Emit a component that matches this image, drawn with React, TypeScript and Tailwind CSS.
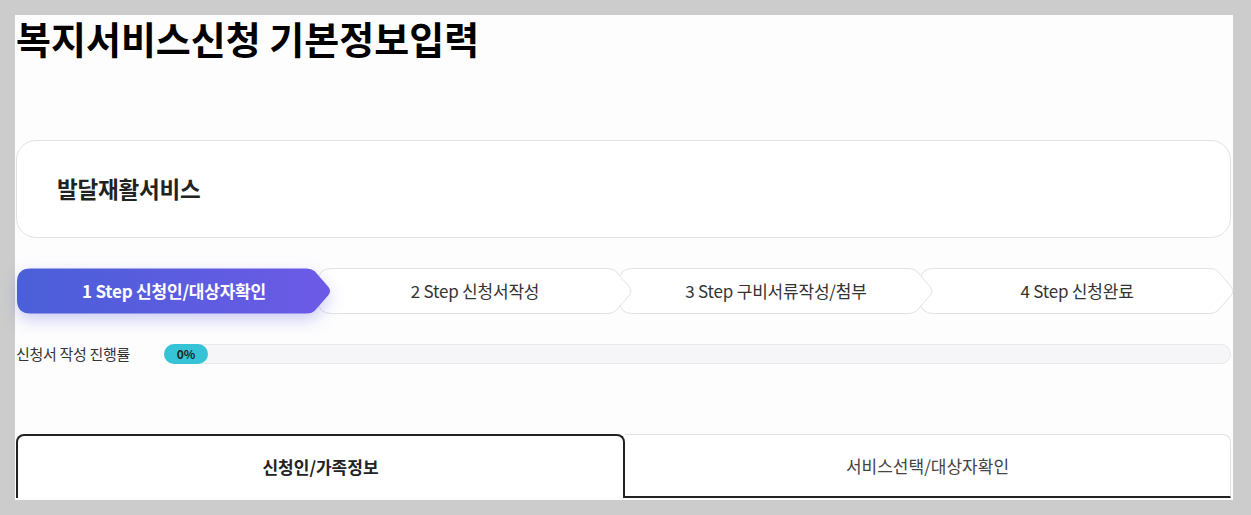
import React from 'react';

const FONT = "font-['Noto_Sans_CJK_KR','Noto_Sans',sans-serif]";

const steps = [
  { label: '1 Step 신청인/대상자확인', active: true, z: 'z-40' },
  { label: '2 Step 신청서작성', active: false, z: 'z-30' },
  { label: '3 Step 구비서류작성/첨부', active: false, z: 'z-20' },
  { label: '4 Step 신청완료', active: false, z: 'z-10' },
];

// chevron outline for one step, 315 x 46
const chevron =
  'M14 0.5 H290 Q295 0.5 298 3 L312 19 Q315 23 312 27 L298 43 Q295 45.5 290 45.5 H14 Q0.5 45.5 0.5 32 V14 Q0.5 0.5 14 0.5 Z';

const StepItem = ({ label, active, first, z }: { label: string; active: boolean; first: boolean; z: string }) => (
  <div className={`relative h-[46px] w-[316px] shrink-0 ${z} ${first ? '' : '-ml-[15px]'}`}>
    <svg
      width="316"
      height="46"
      viewBox="0 0 315 46"
      className={`absolute inset-0 overflow-visible ${active ? 'drop-shadow-[0_6px_8px_rgba(90,90,220,0.3)]' : ''}`}
    >
      <defs>
        <linearGradient id="stepGrad" x1="0" y1="0" x2="1" y2="0">
          <stop offset="0" stopColor="#4a5fd8" />
          <stop offset="1" stopColor="#6c5ae6" />
        </linearGradient>
      </defs>
      <path
        d={chevron}
        fill={active ? 'url(#stepGrad)' : '#ffffff'}
        stroke={active ? 'none' : '#e2e2e6'}
        strokeWidth="1"
      />
    </svg>
    <div
      className={`relative flex h-full items-center justify-center text-[17px] tracking-[-0.2px] ${
        active ? 'font-bold text-white' : 'text-[#333]'
      }`}
    >
      {label}
    </div>
  </div>
);

export default function App() {
  return (
    <div className={`h-[515px] w-[1251px] bg-[#cccccc] pl-[15px] pr-[18px] pt-[15px] ${FONT}`}>
      <div className="h-[485px] bg-[#fdfdfe] pl-[1px] pr-[2px]">
        <h1 className="text-[38px] font-bold leading-[45px] text-black">
          복지서비스신청 기본정보입력
        </h1>

        <div className="mt-[80px] flex h-[98px] items-center rounded-[20px] border border-[#e2e2e6] bg-white pl-[40px]">
          <span className="text-[22.5px] font-bold tracking-[-0.2px] text-[#222]">발달재활서비스</span>
        </div>

        <div className="mt-[30px] flex">
          {steps.map((s, i) => (
            <StepItem key={s.label} label={s.label} active={s.active} first={i === 0} z={s.z} />
          ))}
        </div>

        <div className="mt-[30px] flex h-[20px] items-center">
          <span className="w-[148px] text-[15px] leading-[20px] tracking-[-0.3px] text-[#333]">신청서 작성 진행률</span>
          <div className="flex h-[20px] flex-1 items-center rounded-full border border-[#e8e8ec] bg-[#f6f6f8]">
            <div className="-ml-px flex h-[20px] w-[44px] items-center justify-center rounded-full bg-[#36c3d5] text-[12px] font-bold text-[#222]">
              0%
            </div>
          </div>
        </div>

        <div className="mt-[70px] flex h-[64px]">
          <div className="flex flex-1 items-center justify-center rounded-t-[8px] border-2 border-b-0 border-[#222] bg-white text-[17px] font-bold text-[#222]">
            신청인/가족정보
          </div>
          <div className="flex flex-1 items-center justify-center rounded-tr-[8px] border-t border-r border-[#e2e2e6] border-b-2 border-b-[#222] bg-white text-[17px] text-[#444]">
            서비스선택/대상자확인
          </div>
        </div>
      </div>
    </div>
  );
}
